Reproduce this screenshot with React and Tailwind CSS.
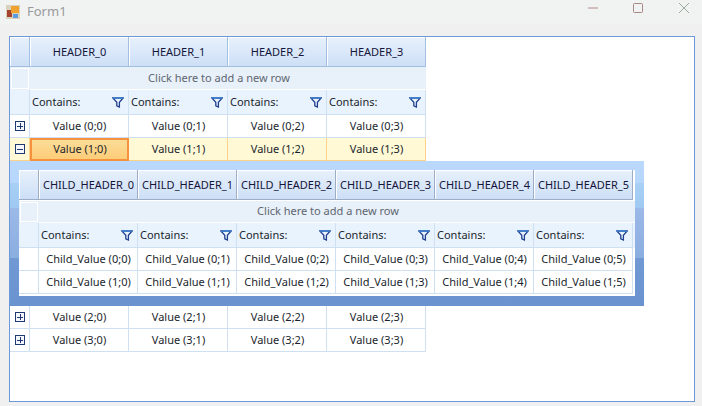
import React from 'react';

const headerCell = "flex items-center justify-center shrink-0 h-full pt-px pl-px border-r border-b bg-gradient-to-b from-[#e8f1fc] to-[#cddff6] shadow-[inset_1px_1px_0_#ffffff]";
const dataCell = "flex items-center justify-center shrink-0 w-[99px] h-full pl-px border-r border-b border-[#d0e0f3]";

function FilterIcon() {
    return (
        <svg width="12" height="11" viewBox="0 0 12 11" className="shrink-0">
            <path d="M0.8 1 H11.2 L7.4 5.2 V10 L4.8 8.8 V5.2 Z" fill="#eaf3fc" stroke="#1f3f8f" strokeWidth="1.3" />
            <path d="M0.8 1 H11.2" stroke="#3f86d6" strokeWidth="1.4" />
        </svg>
    );
}

function ExpandIcon({ open }) {
    return (
        <svg width="10" height="10" viewBox="0 0 10 10" shapeRendering="crispEdges">
            <rect x="0.5" y="0.5" width="9" height="9" fill="#f4f8fd" stroke="#1f3a72" />
            <path d={open ? "M2 5 H8" : "M2 5 H8 M5 2 V8"} stroke="#1f3a72" />
        </svg>
    );
}

function HeaderRow({ labels, borderColor }) {
    return (
        <div className="flex h-[30px]">
            <div className={`${headerCell} ${borderColor} w-5`}></div>
            {labels.map(l => (
                <div key={l} className={`${headerCell} ${borderColor} w-[99px] text-[#15153a]`}>{l}</div>
            ))}
        </div>
    );
}

function NewRow({ width, height }) {
    return (
        <div className="flex bg-[#e8f0fa] text-[#5e6670]" style={{ height }}>
            <div className="w-5 shrink-0 h-full p-px">
                <div className="h-full border border-white"></div>
            </div>
            <div className="flex items-center justify-center h-full pr-[18px] border-b border-white" style={{ width }}>
                Click here to add a new row
            </div>
        </div>
    );
}

function FilterRow({ count }) {
    return (
        <div className="flex h-[25px] bg-[#e9f3fd]">
            <div className="w-5 shrink-0 h-full border-r border-b border-[#d0e0f3]"></div>
            {Array.from({ length: count }).map((_, i) => (
                <div key={i} className={`${dataCell} justify-between! pl-[2px]! pr-[4px]`}>
                    <span className="text-[#1a1f2c]">Contains:</span>
                    <FilterIcon />
                </div>
            ))}
        </div>
    );
}

function DataRow({ prefix, row, count, expand, selected }) {
    return (
        <div className={`flex h-[23px] text-[#1a1f2c] ${selected ? 'bg-[#fff9d6]' : 'bg-white'}`}>
            <div className={`w-5 shrink-0 h-full pl-px flex items-center justify-center border-r border-b ${selected ? 'border-[#fcd28a]' : 'border-[#d0e0f3]'}`}>
                {expand && <ExpandIcon open={selected} />}
            </div>
            {Array.from({ length: count }).map((_, i) => (
                selected && i === 0
                    ? <div key={i} className="flex items-center justify-center shrink-0 w-[99px] h-full pl-px border-2 border-[#f6913d] bg-gradient-to-b from-[#fbdc97] to-[#fdcd78]">{prefix} ({row};{i})</div>
                    : <div key={i} className={`${dataCell} ${selected ? 'border-[#fcd28a]!' : ''}`}>{prefix} ({row};{i})</div>
            ))}
        </div>
    );
}

function DetailPanel() {
    const labels = [0, 1, 2, 3, 4, 5].map(i => `CHILD_HEADER_${i}`);
    return (
        <div className="w-[634px] h-[145px] pt-[9px] px-[9px] bg-[linear-gradient(to_bottom,#bad8fc_0,#b6d6fb_22px,#a8d0f6_22px,#9fc9f2_47px,#9cb9e8_47px,#8aaee0_97px,#7199d4_97px,#6a92cf_145px)]">
            <div className="w-[616px] h-[126px] bg-white">
                <HeaderRow labels={labels} borderColor="border-[#9dadc6]" />
                <div className="mt-px">
                    <NewRow width={596} height={22} />
                </div>
                <FilterRow count={6} />
                <DataRow prefix="Child_Value" row={0} count={6} />
                <DataRow prefix="Child_Value" row={1} count={6} />
            </div>
        </div>
    );
}

export default function App() {
    return (
        <div className="w-[702px] h-[406px] overflow-hidden flex flex-col bg-[#f0f0f0] text-[11px] font-['Noto_Sans',sans-serif]">
            <div className="h-6 shrink-0 flex items-center justify-between bg-[#f1f3f3]">
                <div className="flex items-center pl-[6px] gap-[7px]">
                    <svg width="14" height="14" viewBox="0 0 14 14" shapeRendering="crispEdges">
                        <rect width="14" height="14" fill="#d9d3bd" />
                        <rect x="1" y="5" width="5" height="7" fill="#a5432f" />
                        <rect x="5" y="1" width="8" height="7" fill="#f0a22e" />
                        <rect x="7" y="9" width="5" height="4" fill="#5b9be0" />
                    </svg>
                    <span className="text-[13px] text-[#9a9a9a]">Form1</span>
                </div>
                <div className="flex items-center pb-2">
                    <svg width="12" height="2" viewBox="0 0 12 2" className="mr-[33px]"><path d="M1 1 H11" stroke="#b08a86" /></svg>
                    <svg width="12" height="12" viewBox="0 0 12 12" className="mr-[34px]"><rect x="1.5" y="1.5" width="9" height="9" rx="1" fill="none" stroke="#a88784" /></svg>
                    <svg width="12" height="12" viewBox="0 0 12 12" className="mr-[12px]"><path d="M1 1 L11 11 M11 1 L1 11" stroke="#9bab9f" /></svg>
                </div>
            </div>
            <div className="flex-1 min-h-0 pt-3 pl-[9px] pr-[7px] pb-1">
                <div className="h-full border border-[#6d98d9] bg-white">
                    <div className="w-[416px]">
                        <HeaderRow labels={['HEADER_0', 'HEADER_1', 'HEADER_2', 'HEADER_3']} borderColor="border-[#a3bfdf]" />
                        <NewRow width={396} height={23} />
                        <FilterRow count={4} />
                        <DataRow prefix="Value" row={0} count={4} expand />
                        <DataRow prefix="Value" row={1} count={4} expand selected />
                    </div>
                    <DetailPanel />
                    <div className="w-[416px]">
                        <DataRow prefix="Value" row={2} count={4} expand />
                        <DataRow prefix="Value" row={3} count={4} expand />
                    </div>
                </div>
            </div>
        </div>
    );
}
